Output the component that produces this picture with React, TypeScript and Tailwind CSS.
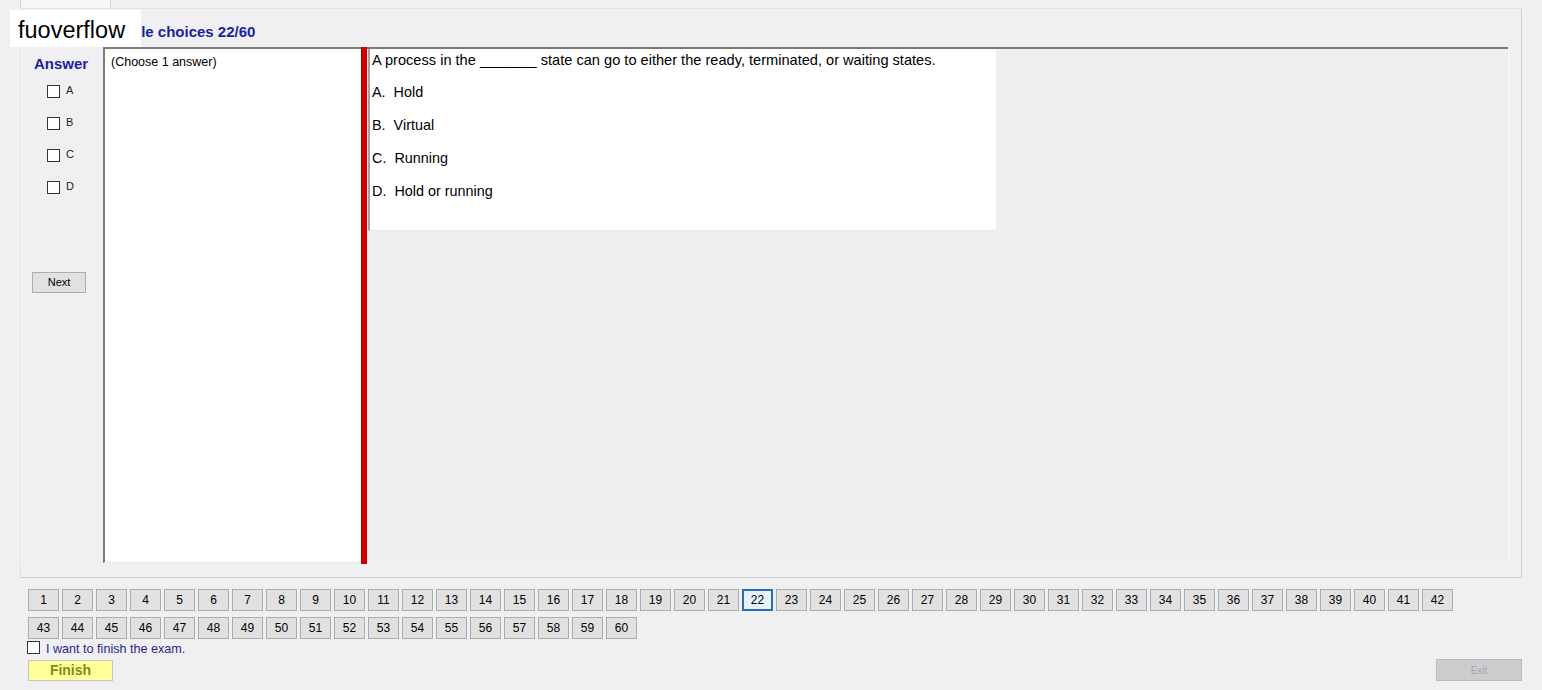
import React from "react";

const font = "font-['Liberation_Sans',Arial,sans-serif]";

function NumButton({ n, active }: { n: number; active?: boolean }) {
  return (
    <div
      className={
        active
          ? "w-[31px] h-[22px] flex items-center justify-center text-[12px] text-black bg-[#e5f1fb] border-2 border-[#2f6eae]"
          : "w-[31px] h-[22px] flex items-center justify-center text-[12px] text-black bg-[#e1e1e1] border border-[#adadad]"
      }
    >
      {n}
    </div>
  );
}

export default function App() {
  const row1 = Array.from({ length: 42 }, (_, i) => i + 1);
  const row2 = Array.from({ length: 18 }, (_, i) => i + 43);
  const answers = ["A", "B", "C", "D"];
  const options = ["A.  Hold", "B.  Virtual", "C.  Running", "D.  Hold or running"];
  return (
    <div className={`relative w-[1542px] h-[690px] overflow-hidden bg-[#f0eff1] ${font}`}>
      {/* tab header */}
      <div className="h-[8px] pl-[20px] flex">
        <div className="w-[91px] h-full border-x border-[#d6d6d6] bg-[#f7f7f7]" />
      </div>
      {/* tab page */}
      <div className="ml-[20px] w-[1502px] h-[570px] border border-[#e3e3e3] border-r-[#d0d0d0] border-b-[#d0d0d0] flex flex-col">
        <div className="h-[38px] pt-[14px] pl-[76px]">
          <div className="text-[15px] leading-[17px] font-bold text-[#1e1ea4]">Multiple choices 22/60</div>
        </div>
        <div className="h-[516px] flex">
          {/* answer column */}
          <div className="w-[82px] flex flex-col border-l border-[#fafafa]">
            <div className="pt-[8px] pl-[12px] text-[15px] leading-[17px] font-bold text-[#1e1ea4]">Answer</div>
            <div className="flex flex-col gap-[19px] pt-[13px] pl-[25px]">
              {answers.map((a) => (
                <div key={a} className="flex items-center h-[13px]">
                  <div className="w-[13px] h-[13px] border border-[#333] bg-white" />
                  <span className="ml-[6px] text-[11px] text-[#222] leading-[13px] -mt-[2px]">{a}</span>
                </div>
              ))}
            </div>
            <div className="mt-[78px] ml-[10px] w-[54px] h-[21px] bg-[#e1e1e1] border border-[#adadad] flex items-center justify-center text-[11px] text-black">
              Next
            </div>
          </div>
          {/* left white panel */}
          <div className="w-[258px] h-full bg-white border-l-2 border-t-2 border-l-[#7c7c7c] border-t-[#7c7c7c] border-b border-b-[#e8e8e8] pl-[6px] pt-[6px]">
            <div className="text-[12.5px] leading-[14px] text-black">(Choose 1 answer)</div>
          </div>
          {/* splitter */}
          <div className="w-[6px] h-[517px] bg-[#d40000] border-l border-[#a80000]" />
          {/* right area */}
          <div className="w-[1141px] h-full bg-[#f1eef2] border-t-2 border-[#7a7a7a] flex flex-col">
            <div className="w-[628px] h-[182px] ml-[1px] bg-white border-l-2 border-[#a3a3a3] border-b border-b-[#e6e6e6] pl-[2px] pt-[3px]">
              <div className="text-[14.6px] leading-[16px] text-black">
                A process in the _______ state can go to either the ready, terminated, or waiting states.
              </div>
              {options.map((o, i) => (
                <div
                  key={o}
                  className={`${i === 0 ? "mt-[16px]" : "mt-[17px]"} text-[14.4px] leading-[16px] text-black whitespace-pre`}
                >
                  {o}
                </div>
              ))}
            </div>
          </div>
          <div className="flex-1 border-l border-[#fbfbfb]" />
        </div>
      </div>
      {/* number buttons */}
      <div className="mt-[11px] pl-[28px] flex flex-col gap-[6px]">
        <div className="flex gap-[3px]">
          {row1.map((n) => (
            <NumButton key={n} n={n} active={n === 22} />
          ))}
        </div>
        <div className="flex gap-[3px]">
          {row2.map((n) => (
            <NumButton key={n} n={n} />
          ))}
        </div>
      </div>
      <div className="mt-[1px] pl-[27px] flex items-center h-[14px]">
        <div className="w-[13px] h-[13px] border border-[#333] bg-white" />
        <span className="ml-[6px] text-[12.6px] leading-[14px] text-[#2a1f8f] mt-[3px]">I want to finish the exam.</span>
      </div>
      <div className="mt-[6px] pl-[28px] pr-[20px] flex justify-between items-start">
        <div className="w-[85px] h-[21px] bg-[#ffff9c] border border-[#c8c8b0] flex items-center justify-center text-[14px] font-bold text-[#7e8d14]">
          Finish
        </div>
        <div className="w-[86px] h-[22px] -mt-[1px] bg-[#cfcccf] border border-[#bdbabd] flex items-center justify-center text-[10px] text-[#a8a5a8]">
          Exit
        </div>
      </div>
      {/* watermark */}
      <div className="absolute left-[10px] top-[10px] w-[131px] h-[37px] bg-white flex items-center pl-[8px] pt-[4px] text-[23.5px] leading-none text-black">
        fuoverflow
      </div>
    </div>
  );
}
